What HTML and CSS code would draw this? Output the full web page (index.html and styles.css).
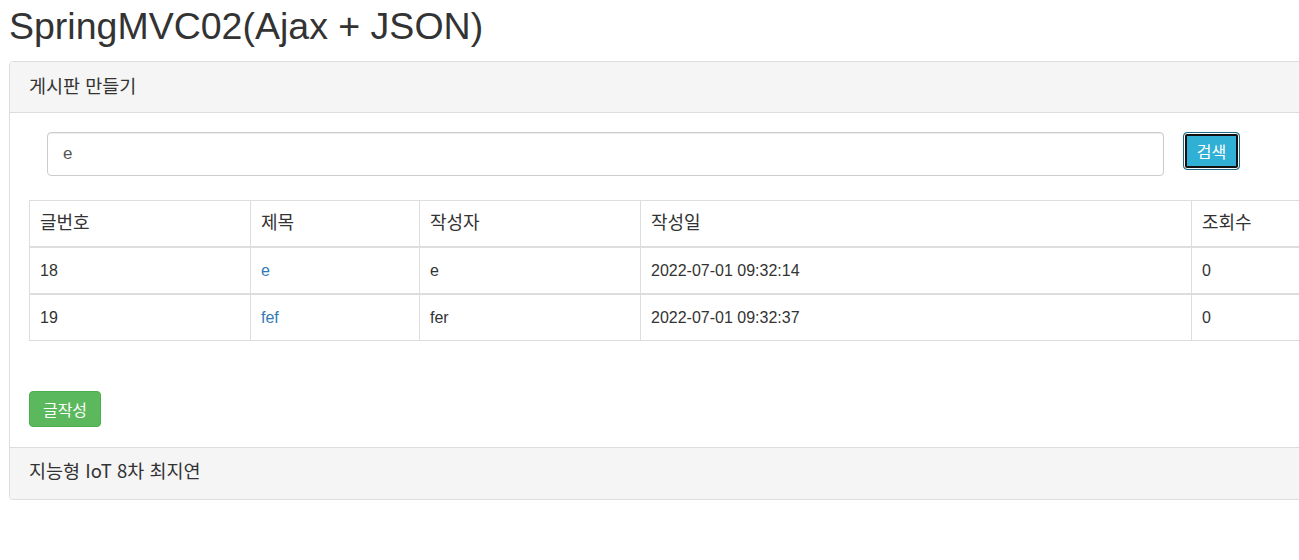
FILE: index.html
```html
<!DOCTYPE html>
<html lang="ko">
<head>
<meta charset="utf-8">
<title>SpringMVC02</title>
<link rel="stylesheet" href="styles.css">
</head>
<body>
<div class="page">
  <h1 class="title">SpringMVC02(Ajax + JSON)</h1>
  <div class="panel">
    <div class="panel-heading">게시판 만들기</div>
    <div class="panel-body">
      <div class="search-row">
        <input class="search-input" type="text" value="e">
        <button class="btn btn-info" type="button">검색</button>
      </div>
      <table class="board">
        <colgroup>
          <col class="c1"><col class="c2"><col class="c3"><col class="c4"><col class="c5">
        </colgroup>
        <thead>
          <tr><th>글번호</th><th>제목</th><th>작성자</th><th>작성일</th><th>조회수</th></tr>
        </thead>
        <tbody>
          <tr><td>18</td><td><a href="#">e</a></td><td>e</td><td>2022-07-01 09:32:14</td><td>0</td></tr>
        </tbody>
        <tbody>
          <tr><td>19</td><td><a href="#">fef</a></td><td>fer</td><td>2022-07-01 09:32:37</td><td>0</td></tr>
        </tbody>
      </table>
      <button class="btn btn-success" type="button">글작성</button>
    </div>
    <div class="panel-footer">지능형 IoT 8차 최지연</div>
  </div>
</div>
</body>
</html>
```

FILE: styles.css
```css
html, body {
  overflow: hidden;
}
body {
  margin: 0;
  background: #fff;
  color: #333;
  font-family: "Liberation Sans", "Noto Sans CJK KR", Arial, sans-serif;
  font-size: 14px;
  line-height: 20px;
}
.page {
  width: 1340px;
  padding-left: 9px;
}
.title {
  margin: 6px 0 14px 0;
  font-size: 37.5px;
  font-weight: normal;
  line-height: 1.1;
  color: #333;
}
.panel {
  width: 1321px;
  border: 1px solid #ddd;
  border-radius: 4px;
  box-shadow: 0 1px 1px rgba(0,0,0,0.05);
}
.panel-heading {
  background: #f5f5f5;
  border-bottom: 1px solid #ddd;
  border-radius: 3px 3px 0 0;
  height: 50px;
  line-height: 46px;
  padding: 0 19px;
  font-family: "Noto Sans CJK KR", "Liberation Sans", sans-serif;
  font-size: 18.5px;
}
.panel-body {
  padding: 19px 19px 20px 19px;
}
.search-row {
  display: flex;
  align-items: flex-start;
  gap: 19px;
  padding-left: 18px;
}
.search-input {
  box-sizing: border-box;
  width: 1117px;
  height: 44px;
  padding: 0 15px;
  border: 1px solid #ccc;
  border-radius: 4px;
  font-family: "Liberation Sans", "Noto Sans CJK KR", Arial, sans-serif;
  font-size: 17px;
  color: #555;
  box-shadow: inset 0 1px 1px rgba(0,0,0,0.075);
  outline: none;
}
.btn {
  box-sizing: border-box;
  border-radius: 4px;
  font-family: "Noto Sans CJK KR", "Liberation Sans", sans-serif;
  font-size: 16px;
  color: #fff;
  cursor: pointer;
  line-height: 20px;
}
.btn-info {
  width: 57px;
  height: 38px;
  padding: 0;
  background: #31b0d5;
  border: 1px solid #1b6d85;
  box-shadow: inset 0 0 0 1px #fff, inset 0 0 0 3px #111;
}
.board {
  margin-top: 24px;
  width: 1282px;
  border-collapse: collapse;
  table-layout: fixed;
  border: 1px solid #ddd;
}
.c1 { width: 221px; }
.c2 { width: 169px; }
.c3 { width: 221px; }
.c4 { width: 551px; }
.c5 { width: 120px; }
.board th,
.board td {
  border: 1px solid #ddd;
  padding: 12px 10px 12px 10px;
  height: 21px;
  line-height: 21px;
  text-align: left;
  font-weight: normal;
  white-space: nowrap;
  overflow: hidden;
}
.board th {
  padding: 10px 10px 14px 10px;
  font-family: "Noto Sans CJK KR", "Liberation Sans", sans-serif;
  font-size: 18px;
}
.board td {
  font-size: 16px;
}
.board thead th {
  border-bottom: 2px solid #ddd;
}
.board tbody + tbody {
  border-top: 2px solid #ddd;
}
.board a {
  color: #337ab7;
  text-decoration: none;
}
.btn-success {
  display: block;
  margin-top: 50px;
  width: 72px;
  height: 36px;
  padding: 0;
  background: #5cb85c;
  border: 1px solid #4cae4c;
}
.panel-footer {
  background: #f5f5f5;
  border-top: 1px solid #ddd;
  border-radius: 0 0 3px 3px;
  height: 51px;
  line-height: 45px;
  padding: 0 19px;
  font-family: "Noto Sans CJK KR", "Liberation Sans", sans-serif;
  font-size: 18.5px;
}
```
